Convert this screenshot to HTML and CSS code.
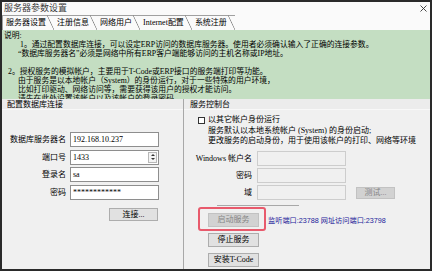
FILE: index.html
```html
<!DOCTYPE html>
<html lang="zh-CN">
<head>
<meta charset="utf-8">
<title>服务器参数设置</title>
<link rel="stylesheet" href="styles.css">
</head>
<body>
<div class="win">
  <div class="titlebar">
    <span class="title">服务器参数设置</span>
    <svg class="close" width="7" height="7" viewBox="0 0 7 7"><path d="M0.5 0.5 L6.5 6.5 M6.5 0.5 L0.5 6.5" stroke="#333" stroke-width="0.9" fill="none"/></svg>
  </div>
  <div class="tabs">
    <div class="tab sel">服务器设置</div>
    <div class="tab">注册信息</div>
    <div class="tab">网络用户</div>
    <div class="tab">Internet配置</div>
    <div class="tab">系统注册</div>
  </div>
  <div class="note">
    <p>说明:</p>
    <p class="i1">1。通过配置数据库连接，可以设定ERP访问的数据库服务器。使用者必须确认输入了正确的连接参数。</p>
    <p class="i3">“数据库服务器名”必须是网络中所有ERP客户端能够访问的主机名称或IP地址。</p>
    <p>&nbsp;</p>
    <p class="i2">2。授权服务的模拟帐户，主要用于T-Code或ERP接口的服务端打印等功能。</p>
    <p class="i3">由于服务是以本地帐户（System）的身份运行，对于一些特殊的用户环境，</p>
    <p class="i3">比如打印驱动、网络访问等，需要获得该用户的授权才能访问。</p>
    <p class="i3 cut">请先在此处设置该帐户以及该帐户的登录密码。</p>
  </div>
  <div class="panels">
    <section class="left">
      <div class="hdr">配置数据库连接</div>
      <div class="form">
        <div class="lbl">数据库服务器名</div>
        <div class="tb">192.168.10.237</div>
        <div class="lbl">端口号</div>
        <div class="tb spinbox">1433
          <div class="spin"><span class="up"></span><span class="dn"></span></div>
        </div>
        <div class="lbl">登录名</div>
        <div class="tb">sa</div>
        <div class="lbl">密码</div>
        <div class="tb pw">************</div>
      </div>
      <div class="btn connect">连接...</div>
    </section>
    <section class="right">
      <div class="hdr">服务控制台</div>
      <div class="chkrow">
        <span class="chk"></span>
        <div class="chktext">
          <p>以其它帐户身份运行</p>
          <p>服务默认以本地系统帐户 (System) 的身份启动;</p>
          <p>更改服务的启动身份，用于使用该帐户的打印、网络等环境</p>
        </div>
      </div>
      <div class="acct">
        <div class="lbl">Windows 帐户名</div>
        <div class="tb dis"></div>
        <div></div>
        <div class="lbl">密码</div>
        <div class="tb dis"></div>
        <div></div>
        <div class="lbl">域</div>
        <div class="tb dis"></div>
        <div class="btn disabled test">测试...</div>
      </div>
      <div class="sep"></div>
      <div class="svc">
        <div class="startrow">
          <div class="startwrap">
            <div class="btn disabled svcbtn">启动服务</div>
            <div class="hl"></div>
          </div>
          <span class="port">监听端口:23788 网址访问端口:23798</span>
        </div>
        <div class="btn svcbtn">停止服务</div>
        <div class="btn svcbtn">安装T-Code</div>
      </div>
    </section>
  </div>
</div>
</body>
</html>
```

FILE: styles.css
```css
* { box-sizing: border-box; margin: 0; padding: 0; }
html, body { width: 434px; height: 272px; background: #ffffff; overflow: hidden; }
body {
  font-family: "Liberation Serif", "Noto Sans CJK SC", serif;
  font-size: 8px;
  color: #000;
}
.win {
  width: 432px;
  height: 271px;
  border: 2px solid #2a2a2a;
  background: #f0f0f0;
  display: flex;
  flex-direction: column;
}
.titlebar {
  height: 12px;
  background: #fafafa;
  display: flex;
  align-items: center;
  justify-content: space-between;
  padding: 0 3px 0 2px;
}
.title { font-size: 9px; line-height: 12px; color: #3a3a3a; }
.close { display: block; }
.tabs {
  height: 16px;
  background: #fafafa;
  display: flex;
  align-items: flex-end;
}
.tab {
  position: relative;
  height: 15px;
  line-height: 14px;
  padding: 0 8px 0 3px;
  border-top: 1px solid #a0a0a0;
  white-space: nowrap;
}
.tab::after {
  content: "";
  position: absolute;
  top: -1px;
  right: 0;
  width: 7px;
  height: 15px;
  background: linear-gradient(to top right, transparent calc(50% - 0.7px), #8a8a8a 50%, transparent calc(50% + 0.7px));
}
.tab.sel { border-left: 1px solid #a0a0a0; padding-left: 3px; }
.note {
  height: 69px;
  background: #c4dec2;
  overflow: hidden;
  padding: 1px 0 0 2px;
  font-size: 7.8px;
  line-height: 9px;
  white-space: nowrap;
}
.note .i1 { padding-left: 16px; }
.note .i2 { padding-left: 4px; }
.note .i3 { padding-left: 14px; }
.note .cut { height: 5px; overflow: hidden; }
.panels { flex: 1; display: flex; }
.left { width: 182px; border-right: 1px solid #a8a8a8; }
.right { flex: 1; }
.hdr { height: 11px; line-height: 11px; padding-left: 5px; background: #ececec; border-bottom: 1px solid #f8f8f8; }
.right .hdr { padding-left: 6px; }
.form {
  margin-top: 22px;
  display: grid;
  grid-template-columns: 64px 89px;
  column-gap: 4px;
  row-gap: 2.5px;
}
.lbl { text-align: right; line-height: 15px; white-space: nowrap; }
.tb {
  position: relative;
  height: 15px;
  line-height: 13px;
  border: 1px solid #8e8e8e;
  background: #fff;
  padding-left: 2px;
  white-space: nowrap;
}
.tb.dis { background: #f0f0f0; border-color: #cdcdcd; }
.spin {
  position: absolute;
  right: 1px;
  top: 1px;
  width: 9px;
  height: 11px;
  display: flex;
  flex-direction: column;
  align-items: center;
  justify-content: space-around;
  border: 1px solid #b8b8b8;
  background: #f4f4f4;
}
.spin .up, .spin .dn { width: 0; height: 0; border-left: 2.5px solid transparent; border-right: 2.5px solid transparent; }
.spin .up { border-bottom: 2.5px solid #333; }
.spin .dn { border-top: 2.5px solid #333; }
.btn {
  height: 14px;
  line-height: 12px;
  text-align: center;
  background: #e1e1e1;
  border: 1px solid #adadad;
  white-space: nowrap;
}
.btn.disabled { background: #d2d2d2; border-color: #c2c2c2; color: #858585; }
.connect { width: 49px; height: 13px; line-height: 11px; margin: 8px 0 0 107px; }
.chkrow { display: flex; gap: 3px; margin-top: 5px; padding-left: 14px; }
.chk { width: 7px; height: 7px; border: 1px solid #333; background: #fff; margin-top: 2px; flex: none; }
.chktext { line-height: 10.5px; white-space: nowrap; }
.acct {
  margin-top: 4.5px;
  display: grid;
  grid-template-columns: 68px 89px 44px;
  column-gap: 5px;
  row-gap: 2px;
}
.test { height: 12px; line-height: 10px; align-self: center; margin-left: 5px; }
.sep { margin: 5px 0 0 33px; width: 82px; height: 1px; background: #a8a8a8; }
.svc { margin-top: 6.5px; padding-left: 24px; display: flex; flex-direction: column; gap: 6px; }
.startrow { display: flex; align-items: center; }
.startwrap { position: relative; }
.svcbtn { width: 51px; }
.hl {
  position: absolute;
  left: -10px;
  top: -6px;
  right: -7px;
  bottom: -4px;
  border: 2px solid #e85a6c;
  border-radius: 3px;
}
.port {
  margin-left: 9px;
  color: #22229a;
  font-family: "Liberation Sans", "Noto Sans CJK SC", sans-serif;
  font-size: 7.2px;
  white-space: nowrap;
}
```
